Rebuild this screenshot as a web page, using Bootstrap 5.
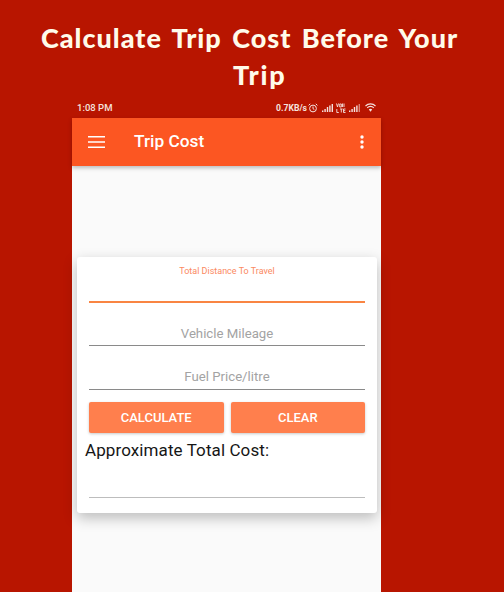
<!DOCTYPE html>
<html lang="en">
<head>
<meta charset="utf-8">
<title>Trip Cost</title>
<link rel="stylesheet" href="https://cdn.jsdelivr.net/npm/bootstrap@5.3.0/dist/css/bootstrap.min.css">
<style>
html,body{height:592px;overflow:hidden;}
body{background:#b81500;font-family:Roboto,"Liberation Sans",sans-serif;}
.shot{width:504px;height:592px;overflow:hidden;}
.headline{color:#fffbea;font-family:"Lato","Liberation Sans",sans-serif;font-weight:900;font-size:27px;line-height:37px;letter-spacing:1px;word-spacing:3px;padding-top:19px;height:98px;margin:0;}
.headline span{display:block;white-space:nowrap;}
.lineone{margin-left:41px;}
.linetwo{margin-left:233px;letter-spacing:1.8px;}
.phone{width:309px;margin-left:72px;height:494px;}
.statusline{height:20px;color:#f5e3df;font-size:9.5px;font-weight:500;padding:0 5px;}
.statusline svg{display:block;}
.speed{font-size:8.6px;font-weight:700;}
.iconalarm{margin-left:1px;}
.iconsignal{margin-left:4px;}
.iconvolte{margin-left:3px;}
.iconwifi{margin-left:5px;}
.appbar{height:48px;background:#fc5622;color:#fff;padding:0 17px 0 16px;box-shadow:0 2px 4px rgba(0,0,0,.25);position:relative;}
.apptitle{font-size:17.3px;font-weight:500;margin-left:29px;color:#fff;}
.appbody{background:#fafafa;height:426px;padding-top:91px;}
.formcard{width:300px;height:256px;margin-left:5px;background:#fff;border-radius:3px;box-shadow:0 5px 14px rgba(0,0,0,.25);padding:0 12px;}
.floatlabel{font-size:9px;color:#fb8a5f;text-align:center;line-height:11px;padding-top:9px;height:19px;}
.fieldline{display:block;width:100%;border:0;border-bottom:1px solid #8a8a8a;background:transparent;outline:0;text-align:center;font-size:13.2px;font-family:Roboto,sans-serif;color:#333;padding:0;}
.fieldline::placeholder{color:#a3a3a3;opacity:1;}
.firstfield{height:27px;border-bottom:2px solid #f98543;}
.secondfield{height:25px;margin-top:18px;line-height:22px;}
.thirdfield{height:26px;margin-top:18px;}
.actionrow{margin-top:12px;gap:7px;}
.actionbtn{flex:1 1 0;height:31px;background:#ff7f4d;border:0;border-radius:2px;color:#fff;font-size:13px;font-weight:500;padding:0;box-shadow:0 1px 3px rgba(0,0,0,.22);line-height:31px;}
.actionbtn:hover,.actionbtn:focus{background:#ff7f4d;color:#fff;}
.costlabel{font-size:17px;line-height:22px;color:#161616;margin:6px 0 0 -4px;letter-spacing:.1px;}
.resultline{height:1px;background:#bdbdbd;margin-top:36px;}
</style>
</head>
<body>
<div class="shot">
  <h1 class="headline"><span class="lineone">Calculate Trip Cost Before Your</span><span class="linetwo">Trip</span></h1>
  <div class="phone">
    <div class="statusline d-flex align-items-center justify-content-between">
      <span>1:08 PM</span>
      <div class="d-flex align-items-center">
        <span class="speed">0.7KB/s</span>
        <svg class="iconalarm" width="10" height="10" viewBox="0 0 10 10" fill="none" stroke="#f5e3df"><circle cx="5" cy="5.500" r="3.400"/><path d="M5 3.500V5.700L6.300 6.500M.6 2.400 2.200.8M9.400 2.400 7.800.8"/></svg>
        <svg class="iconsignal" width="11" height="8" viewBox="0 0 11 8" fill="#f5e3df"><path d="M0 6.500h1.400V8H0zM2.400 5h1.400v3H2.400zM4.800 3h1.400v5H4.800zM7.200 1.500h1.400V8H7.200zM9.600 0H11v8H9.600z"/></svg>
        <svg class="iconvolte" width="10" height="10" viewBox="0 0 10 10" stroke="#f5e3df" fill="none" stroke-width=".9"><path d="M.5.5 1.500 4l1-3.500M3.700 1h1.600v3H3.700zM6.500.5v3.500M8 .5v3.500M.8 6v3.500h2M4 6h2.600M5.300 6v3.500M7.500 6v3.500h2M7.500 6h2M7.500 7.700h1.800"/></svg>
        <svg class="iconvolte" width="11" height="8" viewBox="0 0 11 8" fill="#f5e3df"><path d="M0 6.500h1.400V8H0zM2.400 5h1.400v3H2.400zM4.800 3h1.400v5H4.800zM7.200 1.500h1.400V8H7.200z"/><path d="M9.600 0H11v8H9.600z" opacity=".55"/></svg>
        <svg class="iconwifi" width="11" height="9" viewBox="0 0 11 9" fill="none" stroke="#f5e3df" stroke-width="1.100"><path d="M.5 3a7 7 0 0 1 10 0M2.200 4.800a4.600 4.600 0 0 1 6.600 0"/><path d="M5.500 8.700 3.800 6.500a2.500 2.500 0 0 1 3.400 0z" fill="#f5e3df" stroke="none"/></svg>
      </div>
    </div>
    <nav class="appbar d-flex align-items-center">
      <svg width="17" height="12" viewBox="0 0 17 12" fill="#fff"><path d="M0 0h17v1.600H0zM0 5.200h17v1.600H0zM0 10.400h17V12H0z"/></svg>
      <span class="apptitle">Trip Cost</span>
      <svg class="ms-auto" width="4" height="14" viewBox="0 0 4 14" fill="#fff"><circle cx="2" cy="2" r="1.700"/><circle cx="2" cy="7" r="1.700"/><circle cx="2" cy="12" r="1.700"/></svg>
    </nav>
    <main class="appbody">
      <form class="formcard">
        <div class="floatlabel">Total Distance To Travel</div>
        <input class="fieldline firstfield" type="text" aria-label="Total Distance To Travel">
        <input class="fieldline secondfield" type="text" placeholder="Vehicle Mileage">
        <input class="fieldline thirdfield" type="text" placeholder="Fuel Price/litre">
        <div class="actionrow d-flex">
          <button type="button" class="btn actionbtn">CALCULATE</button>
          <button type="button" class="btn actionbtn">CLEAR</button>
        </div>
        <p class="costlabel">Approximate Total Cost:</p>
        <div class="resultline"></div>
      </form>
    </main>
  </div>
</div>
<script src="https://cdn.jsdelivr.net/npm/bootstrap@5.3.0/dist/js/bootstrap.bundle.min.js"></script>
</body>
</html>
